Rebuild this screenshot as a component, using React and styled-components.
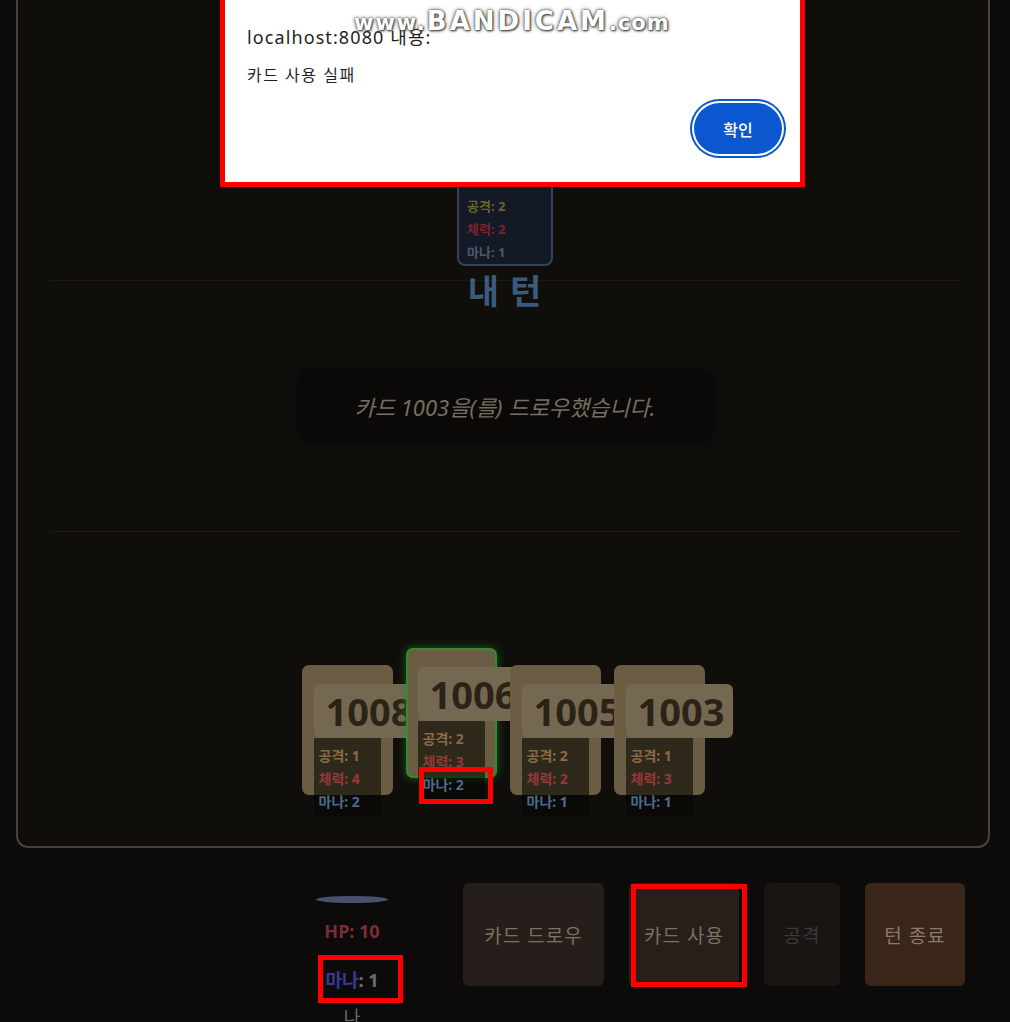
import React from 'react';
import styled, { createGlobalStyle } from 'styled-components';

const GlobalStyle = createGlobalStyle`
  html, body {
    margin: 0;
    padding: 0;
    background: #0c0b09;
  }
  body {
    font-family: "Noto Sans", "Noto Sans CJK KR", sans-serif;
  }
`;

const Screen = styled.div`
  position: relative;
  width: 1010px;
  height: 1022px;
  overflow: hidden;
  background: #0c0b09;
`;

const Board = styled.div`
  box-sizing: border-box;
  margin: 0 20px 0 16px;
  height: 848px;
  border: 2px solid #47423a;
  border-top: none;
  border-radius: 0 0 12px 12px;
  background: #0f0e0b;
  display: flex;
  flex-direction: column;
`;

const OpponentZone = styled.div`
  box-sizing: border-box;
  height: 281px;
  margin: 0 28px 0 32px;
  border-bottom: 1px solid #1d1a16;
  display: flex;
  justify-content: center;
  align-items: flex-end;
  padding-bottom: 14px;
`;

const OpponentCard = styled.div`
  box-sizing: border-box;
  width: 96px;
  height: 120px;
  border: 2px solid #34435a;
  border-radius: 8px;
  background: #131925;
  display: flex;
  flex-direction: column;
  justify-content: flex-end;
  padding: 0 0 0 8px;
`;

const MiddleZone = styled.div`
  box-sizing: border-box;
  height: 251px;
  margin: 0 28px 0 32px;
  border-bottom: 1px solid #1d1a16;
  display: flex;
  flex-direction: column;
  align-items: center;
`;

const TurnLabel = styled.div`
  margin-top: -9px;
  font-size: 34px;
  font-weight: 700;
  line-height: 38px;
  color: #3b5a7c;
  letter-spacing: 1px;
`;

const MessageBox = styled.div`
  margin-top: 62px;
  width: 410px;
  height: 68px;
  background: #0a0907;
  border-radius: 6px;
  box-shadow: 0 0 12px rgba(0, 0, 0, 0.7);
  display: flex;
  align-items: center;
  justify-content: center;
  font-size: 22px;
  font-style: italic;
  color: #766e61;
`;

const HandZone = styled.div`
  flex: 1;
  display: flex;
  justify-content: center;
  align-items: flex-start;
  gap: 13px;
  padding-top: 133px;
`;

const HandCard = styled.div`
  position: relative;
  box-sizing: border-box;
  width: 91px;
  height: 130px;
  flex-shrink: 0;
  background: #6a5d43;
  border: 2px solid ${p => (p.$selected ? '#2f8d2f' : '#6a5d43')};
  border-radius: 7px;
  padding: 17px 0 0 10px;
  transform: ${p => (p.$selected ? 'translateY(-17px)' : 'none')};
  box-shadow: ${p => (p.$selected ? '0 0 10px rgba(46, 150, 46, 0.55)' : 'none')};
`;

const CardNumber = styled.div`
  box-sizing: border-box;
  width: 107px;
  height: 54px;
  background: #746950;
  border-radius: 6px;
  padding-left: 12px;
  font-size: 38px;
  font-weight: 700;
  line-height: 54px;
  color: #2b2318;
  white-space: nowrap;
`;

const CardStats = styled.div`
  width: 67px;
  background: rgba(8, 6, 4, 0.6);
  padding: 6px 0 4px 5px;
  box-sizing: border-box;
`;

const Stat = styled.div`
  font-size: ${p => (p.$small ? '13px' : '14px')};
  font-weight: 700;
  line-height: 23px;
  white-space: nowrap;
  color: ${p =>
    p.$kind === 'atk' ? '#8c6a45' : p.$kind === 'hp' ? '#953838' : '#4b6b93'};
`;

const OpponentStat = styled(Stat)`
  color: ${p =>
    p.$kind === 'atk' ? '#6c6232' : p.$kind === 'hp' ? '#7c2229' : '#4a5a6c'};
`;

const BottomBar = styled.div`
  display: flex;
  align-items: flex-start;
  padding: 35px 0 0 316px;
`;

const PlayerInfo = styled.div`
  width: 72px;
  display: flex;
  flex-direction: column;
  align-items: center;
  padding-top: 13px;
`;

const HpBar = styled.div`
  width: 72px;
  height: 7px;
  border-radius: 50%;
  background: #48526a;
`;

const InfoLine = styled.div`
  margin-top: ${p => p.$gap}px;
  font-size: 18px;
  font-weight: ${p => (p.$plain ? 400 : 700)};
  line-height: 22px;
  white-space: nowrap;
  color: ${p => p.$color};
`;

const ManaLabel = styled.span`
  color: #373a94;
`;

const Actions = styled.div`
  display: flex;
  gap: 25px;
  margin-left: 75px;
`;

const ActionButton = styled.button`
  box-sizing: border-box;
  width: ${p => p.$w}px;
  height: 103px;
  padding: 0;
  border: none;
  border-radius: 6px;
  font-family: "Noto Sans", "Noto Sans CJK KR", sans-serif;
  font-size: 19px;
  letter-spacing: 1px;
  background: ${p => p.$bg};
  color: ${p => p.$fg};
  white-space: nowrap;
`;

const Dialog = styled.div`
  position: absolute;
  top: 0;
  left: 222px;
  width: 581px;
  height: 184px;
  background: #ffffff;
  border-radius: 0 0 8px 8px;
  box-sizing: border-box;
  padding: 25px 0 0 25px;
  color: #1f1f1f;
`;

const DialogTitle = styled.div`
  font-size: 18px;
  letter-spacing: 1.1px;
  line-height: 24px;
`;

const DialogMessage = styled.div`
  margin-top: 15px;
  font-size: 16px;
  letter-spacing: 1.5px;
  line-height: 22px;
`;

const DialogActions = styled.div`
  display: flex;
  justify-content: flex-end;
  padding-right: 21px;
  margin-top: 17px;
`;

const ConfirmButton = styled.button`
  width: 88px;
  height: 51px;
  border: none;
  border-radius: 26px;
  background: #0b57d0;
  color: #ffffff;
  font-family: "Noto Sans", "Noto Sans CJK KR", sans-serif;
  font-size: 16px;
  font-weight: 500;
  box-shadow: 0 0 0 2px #ffffff, 0 0 0 4px #0b57d0;
`;

const Watermark = styled.div`
  position: absolute;
  top: 6px;
  left: 354px;
  display: flex;
  align-items: baseline;
  font-family: "DejaVu Sans", "Liberation Sans", sans-serif;
  font-weight: 700;
  color: #ffffff;
  text-shadow: 0 0 2px #444, 0 0 4px #666, 1px 1px 2px #333;
  white-space: nowrap;
`;

const WatermarkPart = styled.span`
  font-size: ${p => p.$size}px;
  letter-spacing: ${p => p.$spacing}px;
`;

const Annotation = styled.div`
  position: absolute;
  box-sizing: border-box;
  top: ${p => p.$top}px;
  left: ${p => p.$left}px;
  width: ${p => p.$w}px;
  height: ${p => p.$h}px;
  border: 5px solid #ff0000;
  pointer-events: none;
`;

const hand = [
  { id: 1008, atk: 1, hp: 4, mana: 2 },
  { id: 1006, atk: 2, hp: 3, mana: 2, selected: true },
  { id: 1005, atk: 2, hp: 2, mana: 1 },
  { id: 1003, atk: 1, hp: 3, mana: 1 },
];

const actions = [
  { label: '카드 드로우', w: 141, bg: '#261e1a', fg: '#7c7064' },
  { label: '카드 사용', w: 110, bg: '#291f1a', fg: '#7c7064' },
  { label: '공격', w: 76, bg: '#181513', fg: '#3f3935' },
  { label: '턴 종료', w: 100, bg: '#3a2519', fg: '#8a7a6b' },
];

export default function App() {
  return (
    <Screen>
      <GlobalStyle />
      <Board>
        <OpponentZone>
          <OpponentCard>
            <OpponentStat $kind="atk" $small>공격: 2</OpponentStat>
            <OpponentStat $kind="hp" $small>체력: 2</OpponentStat>
            <OpponentStat $kind="mana" $small>마나: 1</OpponentStat>
          </OpponentCard>
        </OpponentZone>
        <MiddleZone>
          <TurnLabel>내 턴</TurnLabel>
          <MessageBox>카드 1003을(를) 드로우했습니다.</MessageBox>
        </MiddleZone>
        <HandZone>
          {hand.map(card => (
            <HandCard key={card.id} $selected={card.selected}>
              <CardNumber>{card.id}</CardNumber>
              <CardStats>
                <Stat $kind="atk">공격: {card.atk}</Stat>
                <Stat $kind="hp">체력: {card.hp}</Stat>
                <Stat $kind="mana">마나: {card.mana}</Stat>
              </CardStats>
            </HandCard>
          ))}
        </HandZone>
      </Board>

      <BottomBar>
        <PlayerInfo>
          <HpBar />
          <InfoLine $gap={17} $color="#7c2c36">HP: 10</InfoLine>
          <InfoLine $gap={27} $color="#6c6c70">
            <ManaLabel>마나</ManaLabel>: 1
          </InfoLine>
          <InfoLine $gap={15} $color="#6a6a6a" $plain>나</InfoLine>
        </PlayerInfo>
        <Actions>
          {actions.map(a => (
            <ActionButton key={a.label} $w={a.w} $bg={a.bg} $fg={a.fg}>
              {a.label}
            </ActionButton>
          ))}
        </Actions>
      </BottomBar>

      <Dialog>
        <DialogTitle>localhost:8080 내용:</DialogTitle>
        <DialogMessage>카드 사용 실패</DialogMessage>
        <DialogActions>
          <ConfirmButton>확인</ConfirmButton>
        </DialogActions>
      </Dialog>

      <Watermark>
        <WatermarkPart $size={21} $spacing={2}>www.</WatermarkPart>
        <WatermarkPart $size={26} $spacing={3}>BANDICAM</WatermarkPart>
        <WatermarkPart $size={21} $spacing={1}>.com</WatermarkPart>
      </Watermark>

      <Annotation $top={-5} $left={220} $w={585} $h={192} />
      <Annotation $top={767} $left={419} $w={74} $h={37} />
      <Annotation $top={884} $left={631} $w={116} $h={103} />
      <Annotation $top={955} $left={318} $w={85} $h={48} />
    </Screen>
  );
}
